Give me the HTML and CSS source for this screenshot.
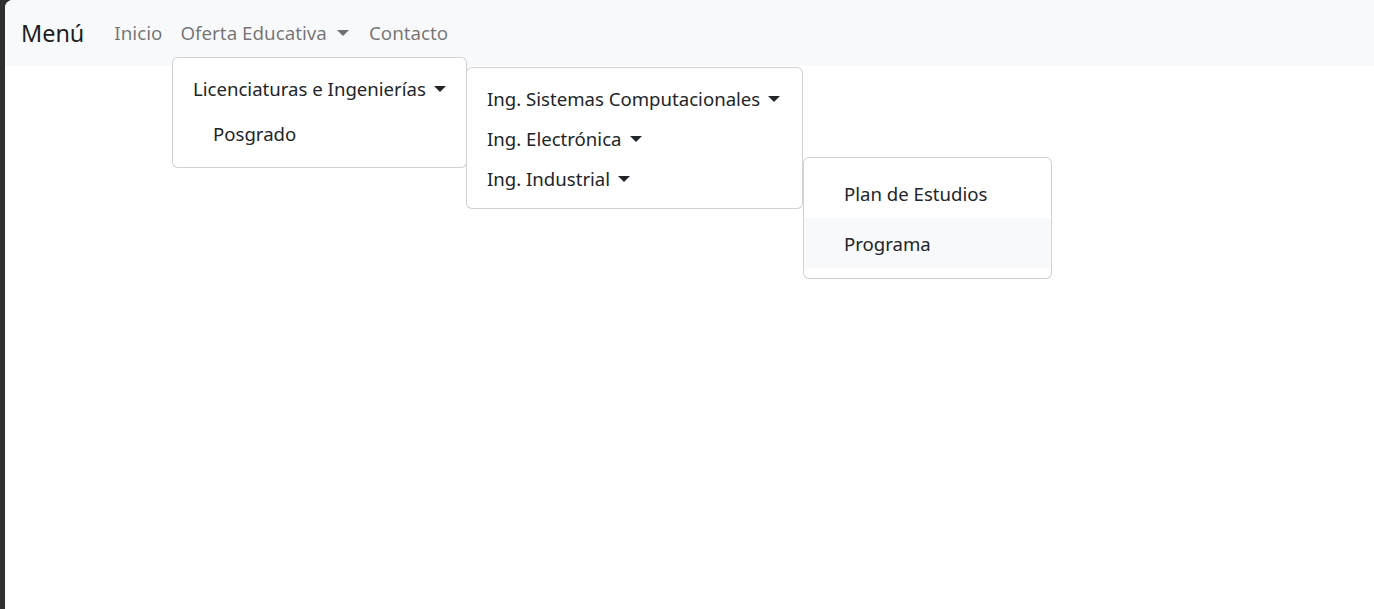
FILE: index.html
```html
<!DOCTYPE html>
<html lang="es">
<head>
<meta charset="utf-8">
<title>Menú</title>
<link rel="stylesheet" href="styles.css">
</head>
<body>
<div class="page">
  <nav class="navbar">
    <a class="brand" href="#">Menú</a>
    <ul class="nav">
      <li class="nav-item"><a class="nav-link" href="#">Inicio</a></li>
      <li class="nav-item"><a class="nav-link caret" href="#">Oferta Educativa</a></li>
      <li class="nav-item"><a class="nav-link" href="#">Contacto</a></li>
    </ul>

    <ul class="menu menu-1">
      <li><a class="menu-item caret item-45" href="#">Licenciaturas e Ingenierías</a></li>
      <li><a class="menu-item indent item-45" href="#">Posgrado</a></li>
    </ul>

    <ul class="menu menu-2">
      <li><a class="menu-item caret" href="#">Ing. Sistemas Computacionales</a></li>
      <li><a class="menu-item caret" href="#">Ing. Electrónica</a></li>
      <li><a class="menu-item caret" href="#">Ing. Industrial</a></li>
    </ul>

    <ul class="menu menu-3">
      <li><a class="menu-item indent item-50" href="#">Plan de Estudios</a></li>
      <li><a class="menu-item indent item-50 active" href="#">Programa</a></li>
    </ul>
  </nav>
</div>
</body>
</html>
```

FILE: styles.css
```css
* { box-sizing: border-box; }

html, body {
  margin: 0;
  height: 100%;
}

body {
  background: #2f2f2f;
  font-family: "Noto Sans", "Open Sans", sans-serif;
  font-size: 18.6px;
  color: #212529;
}

a { text-decoration: none; color: inherit; }
ul { list-style: none; margin: 0; padding: 0; }

.page {
  margin-left: 5px;
  height: 100%;
  background: #ffffff;
  border-top-left-radius: 8px;
  overflow: hidden;
}

.navbar {
  position: relative;
  height: 66px;
  background: #f8f9fa;
  display: flex;
  align-items: center;
  padding-left: 16px;
}

.brand {
  font-size: 23.4px;
  color: rgba(0, 0, 0, 0.9);
  margin-right: 21px;
  line-height: 30px;
}

.nav {
  display: flex;
  align-items: center;
}

.nav-link {
  display: block;
  padding: 8px 9px;
  line-height: 28px;
  font-size: 18.8px;
  color: rgba(0, 0, 0, 0.55);
}

.caret::after {
  content: "";
  display: inline-block;
  margin-left: 8px;
  vertical-align: 4px;
  border-top: 6px solid;
  border-left: 6px solid transparent;
  border-right: 6px solid transparent;
}

.nav-link.caret { padding-right: 11px; }
.nav-link.caret::after { margin-left: 10px; }

.menu {
  position: absolute;
  background: #fff;
  border: 1px solid rgba(0, 0, 0, 0.175);
  border-radius: 6px;
  padding: 10px 0;
  z-index: 10;
}

.menu-1 { left: 167px; top: 57px; width: 295px; padding: 9px 0 10px; }
.menu-2 { left: 461px; top: 67px; width: 337px; }
.menu-3 { left: 798px; top: 157px; width: 249px; }

.menu-item {
  display: block;
  padding: 1px 20px 0;
  height: 40px;
  line-height: 39px;
  color: #212529;
  white-space: nowrap;
}

.item-45 { height: 45px; line-height: 43px; padding-top: 0; }
.item-50 { height: 50px; line-height: 47px; padding-top: 2px; }
.indent { padding-left: 40px; }

.menu-item.active { background: #f8f9fa; }
```
